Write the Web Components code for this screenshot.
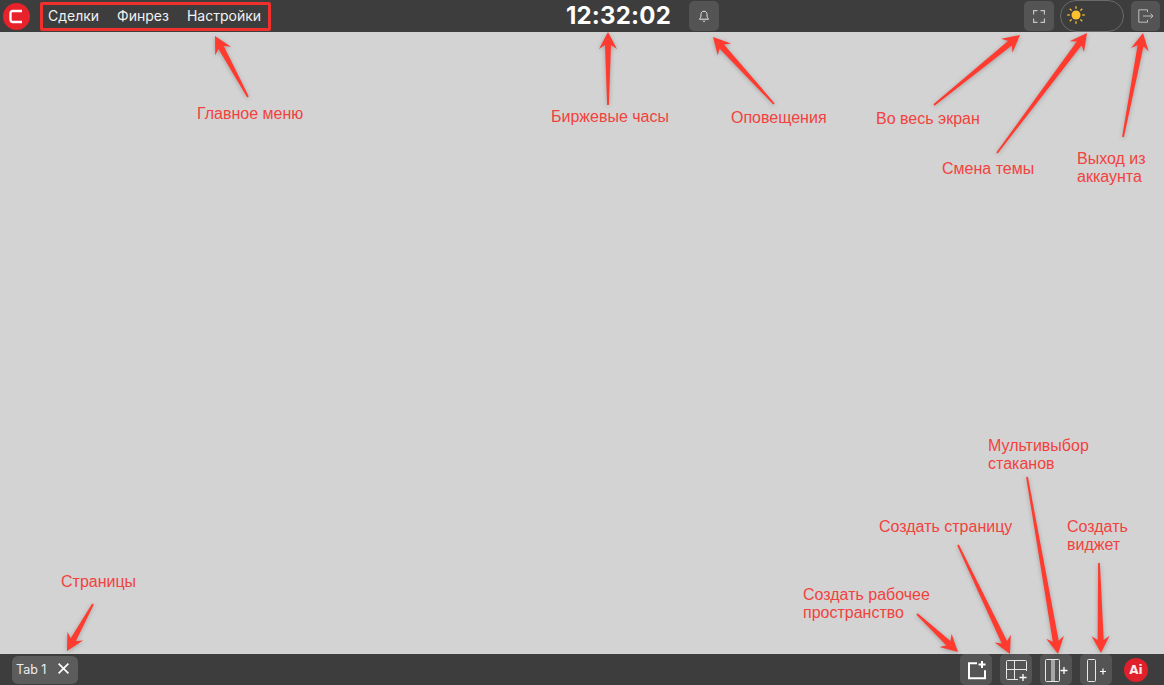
<!DOCTYPE html>
<html lang="ru">
<head>
<meta charset="utf-8">
<title>Терминал</title>
<style>
  html, body { margin: 0; height: 100%; }
  body { font-family: Inter, "Liberation Sans", sans-serif; background: #d3d3d3; overflow: hidden; }
  svg.ic { display: block; fill: none; stroke: #e6e6e6; }
</style>
</head>
<body>
<app-shell>
  <top-bar slot="top">
    <brand-logo slot="logo"></brand-logo>
    <main-menu slot="menu">
      <span>Сделки</span><span>Финрез</span><span>Настройки</span>
    </main-menu>
    <stock-clock slot="clock">12:32:02</stock-clock>
    <icon-button slot="bell" w="30">
      <svg class="ic" width="12" height="13" viewBox="0 0 12 13" stroke-width="1">
        <path d="M6 1.200C3.900 1.200 3 2.800 3 4.600c0 2.600-.6 3.600-1.600 4.600h9.200C9.600 8.200 9 7.200 9 4.600 9 2.800 8.100 1.200 6 1.200z"/>
        <path d="M4.800 10.800c.4.800 2 .8 2.400 0"/>
      </svg>
    </icon-button>
    <icon-button slot="right" w="30">
      <svg class="ic" width="12" height="13" viewBox="0 0 12 13" stroke-width="1.200" style="stroke:#c4c4c4">
        <path d="M.6 4.500V.6h3.900M7.500.6h3.900v3.900M11.400 8.500v3.900H7.500M4.500 12.400H.6V8.500"/>
      </svg>
    </icon-button>
    <theme-toggle slot="right"></theme-toggle>
    <icon-button slot="right" w="29" style="margin-left:1px">
      <svg class="ic" width="16" height="14" viewBox="0 0 16 14" stroke-width="1" style="stroke:#bdbdbd">
        <path d="M9.500 3.200V.8H.8v12.400h8.700v-2.400M5 7h10M12.600 4.600 15 7l-2.400 2.400"/>
      </svg>
    </icon-button>
  </top-bar>

  <bottom-bar slot="bottom">
    <page-tab slot="tabs">Tab 1</page-tab>
    <icon-button slot="tools" w="32" h="31">
      <svg class="ic" width="20" height="20" viewBox="0 0 20 20" stroke-width="2" style="stroke:#fff">
        <path d="M11 3.200H3v15h16v-8M16 1v7M12.500 4.500h7"/>
      </svg>
    </icon-button>
    <icon-button slot="tools" w="32" h="31">
      <svg class="ic" width="26" height="24" viewBox="0 0 26 24" stroke-width="1">
        <path d="M15 21.500H4.500a1 1 0 0 1-1-1v-17a1 1 0 0 1 1-1h18a1 1 0 0 1 1 1V13M3.500 11.500h20M11.500 2.500v19"/>
        <path d="M20 16v7M16.500 19.500h7" stroke-width="1.300" style="stroke:#fff"/>
      </svg>
    </icon-button>
    <icon-button slot="tools" w="32" h="31">
      <svg class="ic" width="28" height="24" viewBox="0 0 28 24" stroke-width="1">
        <rect x="9" y="2" width="4" height="21" fill="#a6a6a6" stroke="none"/>
        <rect x="3.500" y="1.500" width="14" height="22" rx="1"/>
        <path d="M22 9v7M18.500 12.500h7" stroke-width="1.300" style="stroke:#fff"/>
      </svg>
    </icon-button>
    <icon-button slot="tools" w="32" h="31">
      <svg class="ic" width="28" height="24" viewBox="0 0 28 24" stroke-width="1">
        <rect x="5.500" y="1.500" width="8" height="22" rx="1"/>
        <path d="M21 10.500v6M18 13.500h6" stroke-width="1.200" style="stroke:#fff"/>
      </svg>
    </icon-button>
    <ai-badge slot="tools" style="margin-left:4px">Ai</ai-badge>
  </bottom-bar>

  <note-layer slot="notes">
    <note-label x="197" y="105">Главное меню</note-label>
    <note-label x="551" y="108">Биржевые часы</note-label>
    <note-label x="731" y="109">Оповещения</note-label>
    <note-label x="876" y="110">Во весь экран</note-label>
    <note-label x="942" y="160">Смена темы</note-label>
    <note-label x="1077" y="150">Выход из<br>аккаунта</note-label>
    <note-label x="988" y="437">Мультивыбор<br>стаканов</note-label>
    <note-label x="879" y="518">Создать страницу</note-label>
    <note-label x="1067" y="518">Создать<br>виджет</note-label>
    <note-label x="803" y="586">Создать рабочее<br>пространство</note-label>
    <note-label x="61" y="573">Страницы</note-label>

    <note-arrow from="248,97" to="215,36"></note-arrow>
    <note-arrow from="608,105" to="608,32"></note-arrow>
    <note-arrow from="774,104" to="713,37"></note-arrow>
    <note-arrow from="934,105" to="1020,35"></note-arrow>
    <note-arrow from="997,153" to="1087,33"></note-arrow>
    <note-arrow from="1123,137" to="1143,33"></note-arrow>
    <note-arrow from="1027,477" to="1058,654"></note-arrow>
    <note-arrow from="958,545" to="1010,654"></note-arrow>
    <note-arrow from="1099,563" to="1101,653"></note-arrow>
    <note-arrow from="917,614" to="958,652"></note-arrow>
    <note-arrow from="93,604" to="67,651"></note-arrow>
  </note-layer>
</app-shell>

<script>
// kecil: helper supaya tiap class tidak mengulang attachShadow
function shadowOf(el, html) {
  const root = el.attachShadow({ mode: 'open' });
  root.innerHTML = html;
  return root;
}

class AppShell extends HTMLElement {
  constructor() {
    super();
    shadowOf(this, `
      <style>
        :host { display: flex; flex-direction: column; height: 685px; position: relative; background: #d3d3d3; }
        main { flex: 1; }
      </style>
      <slot name="top"></slot>
      <main></main>
      <slot name="bottom"></slot>
      <slot name="notes"></slot>
    `);
  }
}

class TopBar extends HTMLElement {
  constructor() {
    super();
    shadowOf(this, `
      <style>
        :host { display: flex; align-items: center; height: 32px; background: #3d3d3d; }
        .left { display: flex; align-items: center; width: 566px; flex: none; padding-left: 3px; box-sizing: border-box; gap: 10px; }
        .center { display: flex; align-items: center; gap: 18px; }
        .right { display: flex; align-items: center; gap: 6px; margin-left: auto; padding-right: 4px; }
      </style>
      <div class="left"><slot name="logo"></slot><slot name="menu"></slot></div>
      <div class="center"><slot name="clock"></slot><slot name="bell"></slot></div>
      <div class="right"><slot name="right"></slot></div>
    `);
  }
}

class BrandLogo extends HTMLElement {
  constructor() {
    super();
    shadowOf(this, `
      <style>
        :host { display: block; width: 27px; height: 27px; }
        svg { display: block; }
      </style>
      <svg width="27" height="27" viewBox="0 0 27 27">
        <circle cx="13.500" cy="13.500" r="13.500" fill="#e8222a"/>
        <path d="M19 8H9.700A2.200 2.200 0 0 0 7.500 10.200v6.600A2.200 2.200 0 0 0 9.700 19H19" fill="none" stroke="#fff" stroke-width="2.300"/>
      </svg>
    `);
  }
}

class MainMenu extends HTMLElement {
  constructor() {
    super();
    shadowOf(this, `
      <style>
        :host {
          display: flex; align-items: center; gap: 18px; box-sizing: border-box;
          width: 231px; height: 29px; padding: 0 5px 2px; margin-top: 1px;
          border: 3px solid #f0302c; border-radius: 2px;
          font: 400 14px Inter, "Liberation Sans", sans-serif; color: #f2f2f2;
        }
      </style>
      <slot></slot>
    `);
  }
}

class StockClock extends HTMLElement {
  constructor() {
    super();
    shadowOf(this, `
      <style>
        :host { display: block; width: 105px; margin-top: -2px; font: 700 24px Inter, "Liberation Sans", sans-serif; color: #fff; white-space: nowrap; letter-spacing: .2px; }
      </style>
      <slot></slot>
    `);
  }
}

class IconButton extends HTMLElement {
  constructor() {
    super();
    const w = this.getAttribute('w') || 30;
    const h = this.getAttribute('h') || 30;
    shadowOf(this, `
      <style>
        :host { display: flex; align-items: center; justify-content: center; width: ${w}px; height: ${h}px; background: #545454; border-radius: 5px; }
      </style>
      <slot></slot>
    `);
  }
}

class ThemeToggle extends HTMLElement {
  constructor() {
    super();
    let rays = '';
    for (let i = 0; i < 8; i++) {
      const a = i * Math.PI / 4, c = Math.cos(a), s = Math.sin(a);
      rays += `<line x1="${9 + c * 6.2}" y1="${9 + s * 6.2}" x2="${9 + c * 8.8}" y2="${9 + s * 8.8}"/>`;
    }
    shadowOf(this, `
      <style>
        :host { display: flex; align-items: center; box-sizing: border-box; width: 64px; height: 32px; padding: 0 0 2px 6px; border: 1px solid #6a6a6a; border-radius: 16px; }
        svg { display: block; }
      </style>
      <svg width="18" height="18" viewBox="0 0 18 18" stroke="#fbc02d" stroke-width="1.300">
        <circle cx="9" cy="9" r="4.500" fill="#fbc02d" stroke="none"/>
        ${rays}
      </svg>
    `);
  }
}

class BottomBar extends HTMLElement {
  constructor() {
    super();
    shadowOf(this, `
      <style>
        :host { display: flex; align-items: center; justify-content: space-between; height: 31px; background: #3d3d3d; padding: 0 16px 0 12px; }
        .tools { display: flex; align-items: center; gap: 8px; }
      </style>
      <div><slot name="tabs"></slot></div>
      <div class="tools"><slot name="tools"></slot></div>
    `);
  }
}

class PageTab extends HTMLElement {
  constructor() {
    super();
    shadowOf(this, `
      <style>
        :host {
          display: flex; align-items: center; gap: 12px; box-sizing: border-box;
          width: 66px; height: 28px; padding: 0 7px 0 4px; background: #5c5c5c; border-radius: 6px;
          font: 400 12.500px Inter, "Liberation Sans", sans-serif; color: #eee; white-space: nowrap;
        }
        svg { display: block; stroke: #fff; margin-top: -2px; flex: none; }
      </style>
      <slot></slot>
      <svg width="11" height="11" viewBox="0 0 11 11" stroke-width="1.600"><path d="M.6.600l9.800 9.800M10.400.600l-9.800 9.800"/></svg>
    `);
  }
}

class AiBadge extends HTMLElement {
  constructor() {
    super();
    shadowOf(this, `
      <style>
        :host {
          display: flex; align-items: center; justify-content: center; width: 24px; height: 24px;
          border-radius: 50%; background: #e0202a; color: #fbeaea; font: 700 12px "DejaVu Sans", sans-serif;
        }
      </style>
      <slot></slot>
    `);
  }
}

// Lapisan anotasi: label dan panah di atas screenshot
class NoteLayer extends HTMLElement {
  constructor() {
    super();
    shadowOf(this, `
      <style>
        :host { display: block; position: absolute; inset: 0; pointer-events: none; }
      </style>
      <slot></slot>
    `);
  }
}

class NoteLabel extends HTMLElement {
  constructor() {
    super();
    shadowOf(this, `
      <style>
        :host {
          display: block; position: absolute; white-space: nowrap;
          left: ${this.getAttribute('x')}px; top: ${this.getAttribute('y')}px;
          font: 400 16px/18px "Liberation Sans", Arial, sans-serif; color: #f2423d;
        }
      </style>
      <slot></slot>
    `);
  }
}

class NoteArrow extends HTMLElement {
  constructor() {
    super();
    const [x1, y1] = this.getAttribute('from').split(',').map(Number);
    const [x2, y2] = this.getAttribute('to').split(',').map(Number);
    const len = Math.hypot(x2 - x1, y2 - y1);
    const ux = (x2 - x1) / len, uy = (y2 - y1) / len;
    const nx = -uy, ny = ux;
    const head = 17, headW = 9, neck = 3;
    const bx = x2 - ux * head, by = y2 - uy * head;      // pangkal kepala
    const ix = x2 - ux * (head - 4), iy = y2 - uy * (head - 4); // lekuk kepala panah
    const pts = [
      [x1 + nx * .9, y1 + ny * .9],
      [ix + nx * neck, iy + ny * neck],
      [bx + nx * headW, by + ny * headW],
      [x2, y2],
      [bx - nx * headW, by - ny * headW],
      [ix - nx * neck, iy - ny * neck],
      [x1 - nx * .9, y1 - ny * .9]
    ].map(p => p[0].toFixed(1) + ',' + p[1].toFixed(1)).join(' ');
    shadowOf(this, `
      <style>
        :host { display: block; position: absolute; inset: 0; }
        svg { display: block; overflow: visible; }
        polygon { fill: #ff3b30; filter: drop-shadow(0 1px 2px rgba(0,0,0,.25)); }
      </style>
      <svg width="1164" height="685"><polygon points="${pts}"/></svg>
    `);
  }
}

customElements.define('app-shell', AppShell);
customElements.define('top-bar', TopBar);
customElements.define('brand-logo', BrandLogo);
customElements.define('main-menu', MainMenu);
customElements.define('stock-clock', StockClock);
customElements.define('icon-button', IconButton);
customElements.define('theme-toggle', ThemeToggle);
customElements.define('bottom-bar', BottomBar);
customElements.define('page-tab', PageTab);
customElements.define('ai-badge', AiBadge);
customElements.define('note-layer', NoteLayer);
customElements.define('note-label', NoteLabel);
customElements.define('note-arrow', NoteArrow);
</script>
</body>
</html>
